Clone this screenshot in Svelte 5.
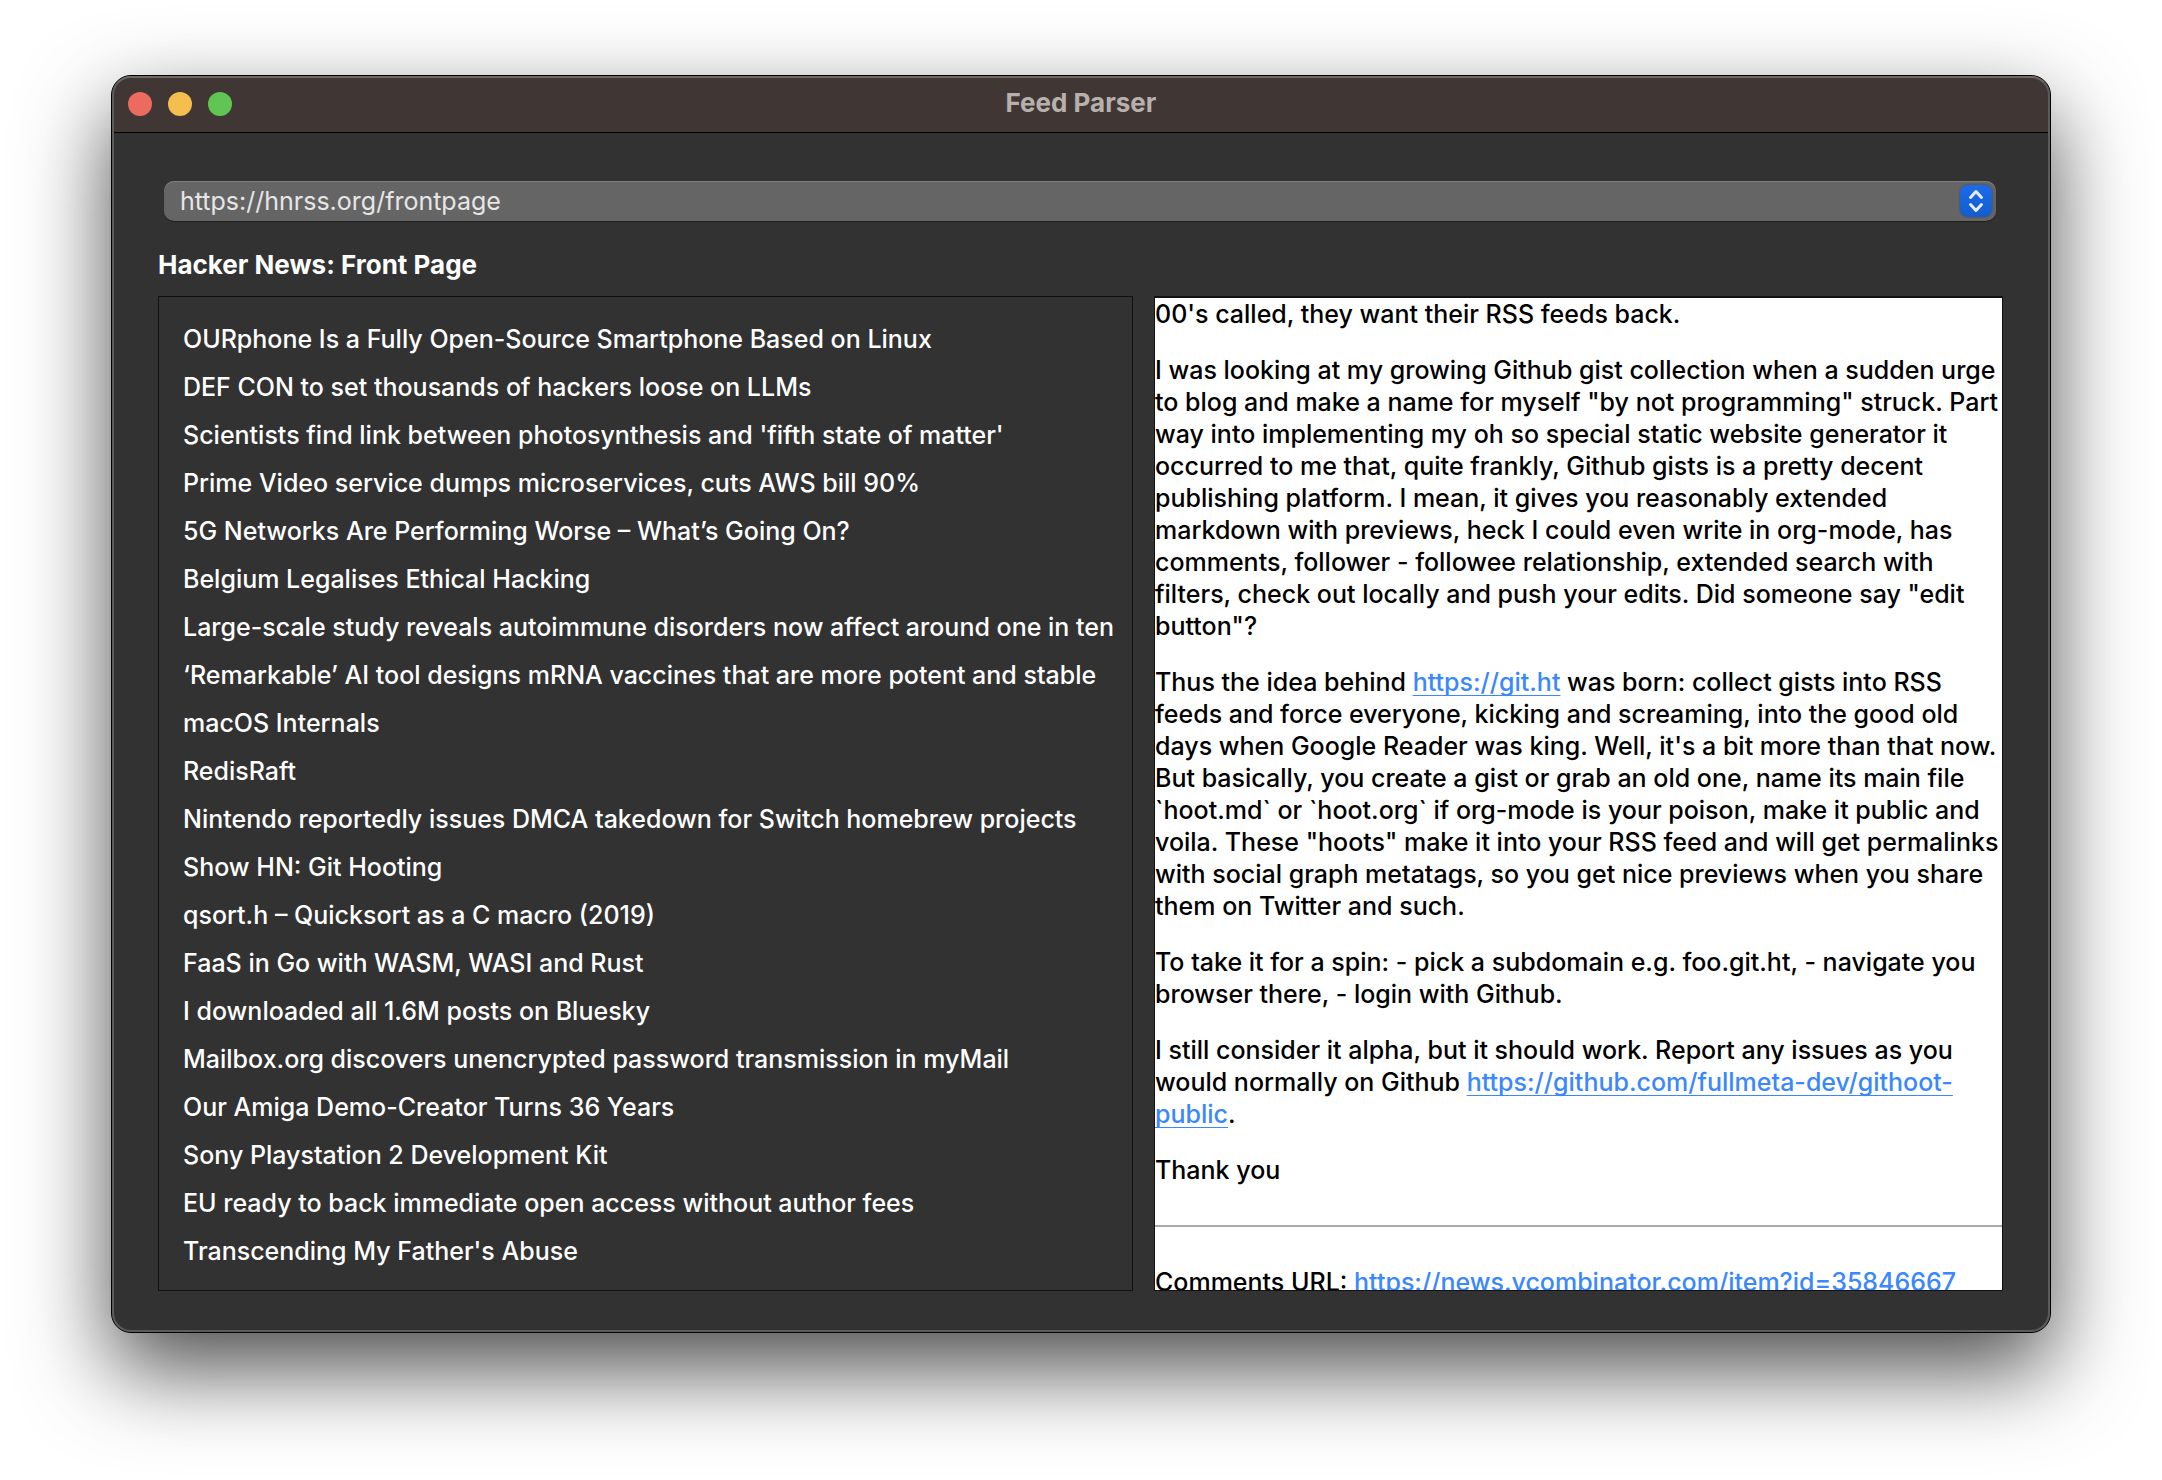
<script>
  const feeds = ['https://hnrss.org/frontpage'];
  let feed = $state(feeds[0]);

  const stories = [
    'OURphone Is a Fully Open-Source Smartphone Based on Linux',
    'DEF CON to set thousands of hackers loose on LLMs',
    "Scientists find link between photosynthesis and 'fifth state of matter'",
    'Prime Video service dumps microservices, cuts AWS bill 90%',
    '5G Networks Are Performing Worse – What’s Going On?',
    'Belgium Legalises Ethical Hacking',
    'Large-scale study reveals autoimmune disorders now affect around one in ten',
    '‘Remarkable’ AI tool designs mRNA vaccines that are more potent and stable',
    'macOS Internals',
    'RedisRaft',
    'Nintendo reportedly issues DMCA takedown for Switch homebrew projects',
    'Show HN: Git Hooting',
    'qsort.h – Quicksort as a C macro (2019)',
    'FaaS in Go with WASM, WASI and Rust',
    'I downloaded all 1.6M posts on Bluesky',
    'Mailbox.org discovers unencrypted password transmission in myMail',
    'Our Amiga Demo-Creator Turns 36 Years',
    'Sony Playstation 2 Development Kit',
    'EU ready to back immediate open access without author fees',
    "Transcending My Father's Abuse",
  ];
</script>

<div class="desktop">
  <main class="window">
    <header class="titlebar">
      <div class="lights">
        <button class="light close" aria-label="Close"></button>
        <button class="light minimize" aria-label="Minimize"></button>
        <button class="light zoom" aria-label="Zoom"></button>
      </div>
      <h1>Feed Parser</h1>
    </header>

    <div class="content">
      <div class="picker">
        <select aria-label="Feed" bind:value={feed}>
          {#each feeds as url}
            <option value={url}>{url}</option>
          {/each}
        </select>
        <svg class="chevrons" viewBox="0 0 32 32" aria-hidden="true">
          <path d="M10.5 12.5 16 6.5l5.5 6M10.5 19.5l5.5 6 5.5-6" />
        </svg>
      </div>

      <h2>Hacker News: Front Page</h2>

      <div class="panes">
        <ul class="stories">
          {#each stories as story}
            <li><button>{story}</button></li>
          {/each}
        </ul>

        <article class="reader">
          <p>00's called, they want their RSS feeds back.</p>
          <p>
            I was looking at my growing Github gist collection when a sudden urge<br />
            to blog and make a name for myself "by not programming" struck. Part<br />
            way into implementing my oh so special static website generator it<br />
            occurred to me that, quite frankly, Github gists is a pretty decent<br />
            publishing platform. I mean, it gives you reasonably extended<br />
            markdown with previews, heck I could even write in org-mode, has<br />
            comments, follower - followee relationship, extended search with<br />
            filters, check out locally and push your edits. Did someone say "edit<br />
            button"?
          </p>
          <p>
            Thus the idea behind <a href="https://git.ht">https://git.ht</a> was born: collect gists into RSS<br />
            feeds and force everyone, kicking and screaming, into the good old<br />
            days when Google Reader was king. Well, it's a bit more than that now.<br />
            But basically, you create a gist or grab an old one, name its main file<br />
            `hoot.md` or `hoot.org` if org-mode is your poison, make it public and<br />
            voila. These "hoots" make it into your RSS feed and will get permalinks<br />
            with social graph metatags, so you get nice previews when you share<br />
            them on Twitter and such.
          </p>
          <p>
            To take it for a spin: - pick a subdomain e.g. foo.git.ht, - navigate you<br />
            browser there, - login with Github.
          </p>
          <p>
            I still consider it alpha, but it should work. Report any issues as you<br />
            would normally on Github <a href="https://github.com/fullmeta-dev/githoot-public">https://github.com/fullmeta-dev/githoot-<br />public</a>.
          </p>
          <p>Thank you</p>
          <hr />
          <p>
            Comments URL: <a href="https://news.ycombinator.com/item?id=35846667">https://news.ycombinator.com/item?id=35846667</a>
          </p>
        </article>
      </div>
    </div>
  </main>
</div>

<style>
  :global(body) {
    background: #fff;
  }

  .desktop {
    padding: 75px 111px 147px;
    overflow: hidden;
    font-family: Inter, 'Liberation Sans', sans-serif;
    font-size: 25px;
    font-weight: 500;
    line-height: 32px;
  }

  .window {
    position: relative;
    border: 1px solid #000;
    border-radius: 20px;
    background: #323232;
    color: #fff;
    box-shadow: 0 36px 88px rgb(0 0 0 / 0.7);
  }

  /* Light rim just inside the dark window outline */
  .window::after {
    content: '';
    position: absolute;
    inset: 0;
    border: 2px solid #5b5b5b;
    border-top-color: #6f6965;
    border-radius: 19px;
    pointer-events: none;
  }

  .titlebar {
    display: grid;
    grid-template-columns: 1fr auto 1fr;
    align-items: center;
    height: 56px;
    padding: 0 16px;
    border-bottom: 1px solid #000;
    border-radius: 19px 19px 0 0;
    background: #403735;
  }

  .lights {
    display: flex;
    gap: 16px;
  }

  .light {
    width: 24px;
    height: 24px;
    padding: 0;
    border: 0;
    border-radius: 50%;
  }

  .close {
    background: #ec6a5e;
  }

  .minimize {
    background: #f4bf4f;
  }

  .zoom {
    background: #61c554;
  }

  h1,
  h2 {
    margin: 0;
    font-size: 26px;
    font-weight: 700;
    line-height: 32px;
  }

  h1 {
    padding-bottom: 2px;
    color: #b9b0ae;
  }

  .content {
    padding: 48px 47px 41px 46px;
  }

  .picker {
    position: relative;
    margin: 0 7px 0 6px;
  }

  select {
    display: block;
    width: 100%;
    height: 40px;
    padding: 0 44px 0 16px;
    border: 0;
    border-radius: 10px;
    appearance: none;
    background: #656565;
    color: #e6e6e6;
    font: inherit;
    font-weight: 400;
    box-shadow:
      inset 0 1px 0 #7f7f7f,
      0 1px 1px rgb(0 0 0 / 0.4);
  }

  .chevrons {
    position: absolute;
    top: 4px;
    right: 4px;
    width: 32px;
    height: 32px;
    border-radius: 8px;
    background: linear-gradient(#1a6bea, #155bcd);
    box-shadow: 0 0 2px rgb(0 0 0 / 0.4);
    fill: none;
    stroke: #e3ecfb;
    stroke-width: 3;
    stroke-linecap: round;
    stroke-linejoin: round;
    pointer-events: none;
  }

  h2 {
    padding: 28px 0 15px;
  }

  .panes {
    display: grid;
    grid-template-columns: 975fr 849fr;
    gap: 21px;
  }

  .stories {
    min-width: 0;
    margin: 0;
    padding: 18px 0 15px 24px;
    border: 1px solid #111;
    list-style: none;
    overflow: hidden;
  }

  .stories button {
    display: block;
    width: 100%;
    padding: 0;
    border: 0;
    background: none;
    color: inherit;
    font: inherit;
    line-height: 48px;
    text-align: left;
    white-space: nowrap;
  }

  /* Height is taken from the story list; the text scrolls inside */
  .reader {
    contain: size;
    min-width: 0;
    border: 1px solid #111;
    border-top-width: 2px;
    background: #fff;
    color: #000;
    overflow: hidden auto;
    scrollbar-width: none;
    white-space: nowrap;
  }

  .reader p {
    margin: 0 0 24px;
  }

  .reader a {
    color: #3a87fe;
    text-decoration: underline;
    text-decoration-thickness: 1px;
    text-decoration-skip-ink: none;
    text-underline-offset: 4px;
  }

  hr {
    height: 2px;
    margin: 39px 0;
    border: 0;
    background: #a9aba9;
  }
</style>
